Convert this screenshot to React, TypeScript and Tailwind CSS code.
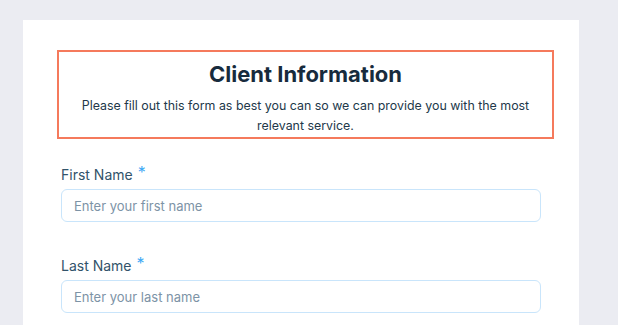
import React from 'react';

function Field({ label, placeholder }: { label: string; placeholder: string }) {
  return (
    <div className="flex flex-col">
      <label className="flex items-start text-[14px] leading-[20px] text-[#32536a]">
        {label}
        <span className="ml-[5px] text-[16px] leading-[14px] text-[#3fa9f5]">*</span>
      </label>
      <input
        type="text"
        placeholder={placeholder}
        className="mt-[4px] h-[33px] w-[480px] rounded-[6px] border border-[#c9e5fb] bg-white px-[12px] text-[13px] text-[#162d3d] placeholder:text-[#7d93a6] focus:outline-none"
      />
    </div>
  );
}

export default function App() {
  return (
    <div
      className="h-[325px] w-full overflow-hidden bg-[#ebecf2] pl-[23px] pt-[20px]"
      style={{ fontFamily: 'Inter, "Noto Sans", sans-serif' }}
    >
      <div className="h-[305px] w-[556px] bg-white pt-[30px]">
        <div className="ml-[34px] flex h-[89px] w-[497px] flex-col items-center border-2 border-[#f57a5c] pt-[7px]">
          <h1 className="text-[22px] font-bold leading-[30px] text-[#172b3d]">Client Information</h1>
          <p className="mt-[7px] px-[12px] text-center text-[12.4px] leading-[20px] text-[#22384a]">
            Please fill out this form as best you can so we can provide you with the most relevant service.
          </p>
        </div>
        <div className="ml-[38px] mt-[26px] flex flex-col gap-[34px]">
          <Field label="First Name" placeholder="Enter your first name" />
          <Field label="Last Name" placeholder="Enter your last name" />
        </div>
      </div>
    </div>
  );
}
